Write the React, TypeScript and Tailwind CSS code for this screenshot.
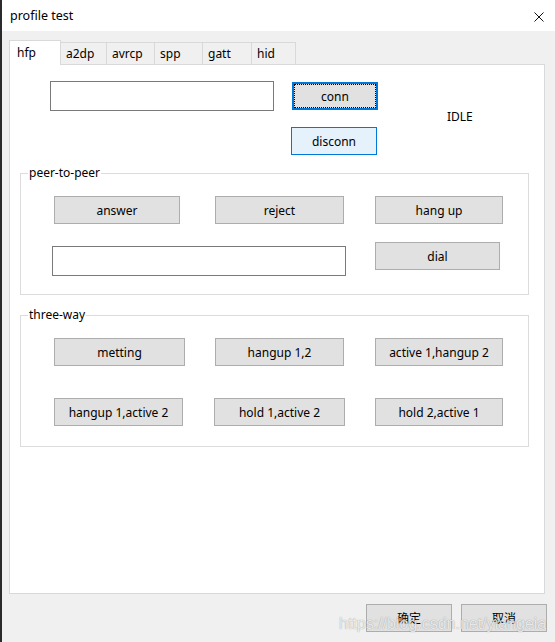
import * as React from "react";

/* ----------------------------- Pieces ----------------------------- */
function Btn({ label, className = "" }: { label: string; className?: string }) {
  return (
    <div
      className={[
        "flex h-[28px] shrink-0 items-center justify-center border border-[#adadad] bg-[#e1e1e1] pt-[2px]",
        className,
      ].join(" ")}
    >
      {label}
    </div>
  );
}

function TextBox({ className = "" }: { className?: string }) {
  return <div className={["h-[30px] shrink-0 border border-[#7a7a7a] bg-white", className].join(" ")} />;
}

function Group({ title, className = "", children }: { title: string; className?: string; children: React.ReactNode }) {
  return (
    <div className={["relative ml-[10px] w-[509px] border border-[#dcdcdc]", className].join(" ")}>
      <span className="absolute -top-[9px] left-[7px] bg-white px-[1px] leading-[16px]">{title}</span>
      {children}
    </div>
  );
}

const TABS = [
  { name: "a2dp", w: "w-[46px]" },
  { name: "avrcp", w: "w-[48px]" },
  { name: "spp", w: "w-[48px]" },
  { name: "gatt", w: "w-[49px]" },
  { name: "hid", w: "w-[44px]" },
];

/* ----------------------------- App ----------------------------- */
export default function App() {
  return (
    <div className="relative flex h-[642px] w-[555px] flex-col overflow-hidden border-l-2 border-[#2b2b2b] bg-[#f0f0f0] font-['Noto_Sans','Noto_Sans_CJK_SC',sans-serif] text-[12px] text-black">
      {/* title bar */}
      <div className="flex h-[31px] shrink-0 items-center justify-between bg-white pl-[8px] pr-[11px] pt-[2px]">
        <span className="text-[12.5px]">profile test</span>
        <svg width="10" height="10" viewBox="0 0 10 10" aria-hidden>
          <path d="M0.5 0.5 L9.5 9.5 M9.5 0.5 L0.5 9.5" stroke="#111" strokeWidth="1" fill="none" />
        </svg>
      </div>

      {/* body */}
      <div className="flex flex-1 flex-col pt-[9px]">
        <div className="pl-[7px]">
          {/* tabs */}
          <div className="flex h-[24px] items-end">
            <div className="relative z-10 -mb-px flex h-[25px] w-[52px] items-center border-x border-t border-[#d9d9d9] bg-white pb-[1px] pl-[7px]">
              hfp
            </div>
            {TABS.map((t) => (
              <div
                key={t.name}
                className={[
                  "flex h-[22px] items-center border-r border-t border-[#d9d9d9] bg-[#f0f0f0] pl-[5px]",
                  t.w,
                ].join(" ")}
              >
                {t.name}
              </div>
            ))}
          </div>

          {/* panel */}
          <div className="h-[530px] w-[536px] border border-[#d9d9d9] bg-white">
            {/* connection row */}
            <div className="flex items-start pl-[40px] pt-[16px]">
              <TextBox className="w-[224px]" />
              <div className="ml-[18px] flex flex-col">
                <div className="mt-[1px] flex h-[28px] w-[86px] border-2 border-[#0078d7] bg-[#e1e1e1]">
                  <span className="flex flex-1 items-center justify-center border border-dotted border-black pt-[2px]">conn</span>
                </div>
                <div className="-ml-px mt-[17px] flex h-[28px] w-[86px] items-center justify-center border border-[#0078d7] bg-[#e5f1fb] pt-[2px]">
                  disconn
                </div>
              </div>
              <span className="ml-[69px] mt-[28px] leading-[16px]">IDLE</span>
            </div>

            {/* peer-to-peer */}
            <Group title="peer-to-peer" className="mt-[18px] h-[122px]">
              <div className="flex pl-[33px] pt-[22px]">
                <Btn label="answer" className="w-[126px]" />
                <Btn label="reject" className="ml-[35px] w-[129px]" />
                <Btn label="hang up" className="ml-[31px] w-[128px]" />
              </div>
              <div className="mt-[18px] flex items-start pl-[31px]">
                <TextBox className="mt-[4px] w-[294px]" />
                <Btn label="dial" className="ml-[29px] w-[125px]" />
              </div>
            </Group>

            {/* three-way */}
            <Group title="three-way" className="mt-[20px] h-[132px]">
              <div className="flex pl-[33px] pt-[22px]">
                <Btn label="metting" className="w-[131px]" />
                <Btn label="hangup 1,2" className="ml-[30px] w-[129px]" />
                <Btn label="active 1,hangup 2" className="ml-[31px] w-[128px]" />
              </div>
              <div className="mt-[32px] flex pl-[33px]">
                <Btn label="hangup 1,active 2" className="w-[129px]" />
                <Btn label="hold 1,active 2" className="ml-[31px] w-[131px]" />
                <Btn label="hold 2,active 1" className="ml-[30px] w-[128px]" />
              </div>
            </Group>
          </div>
        </div>

        {/* footer */}
        <div className="mt-[10px] flex justify-end gap-[9px] pr-[8px]">
          <Btn label="确定" className="w-[86px]" />
          <Btn label="取消" className="w-[86px]" />
        </div>
      </div>

      {/* watermark (present in the original screenshot) */}
      <span className="pointer-events-none absolute left-[337px] top-[612px] font-['Liberation_Sans',sans-serif] text-[16px] text-white/80 [text-shadow:0_0_1px_rgba(0,0,0,0.45)]">
        https://blog.csdn.net/yiangeia
      </span>
    </div>
  );
}
